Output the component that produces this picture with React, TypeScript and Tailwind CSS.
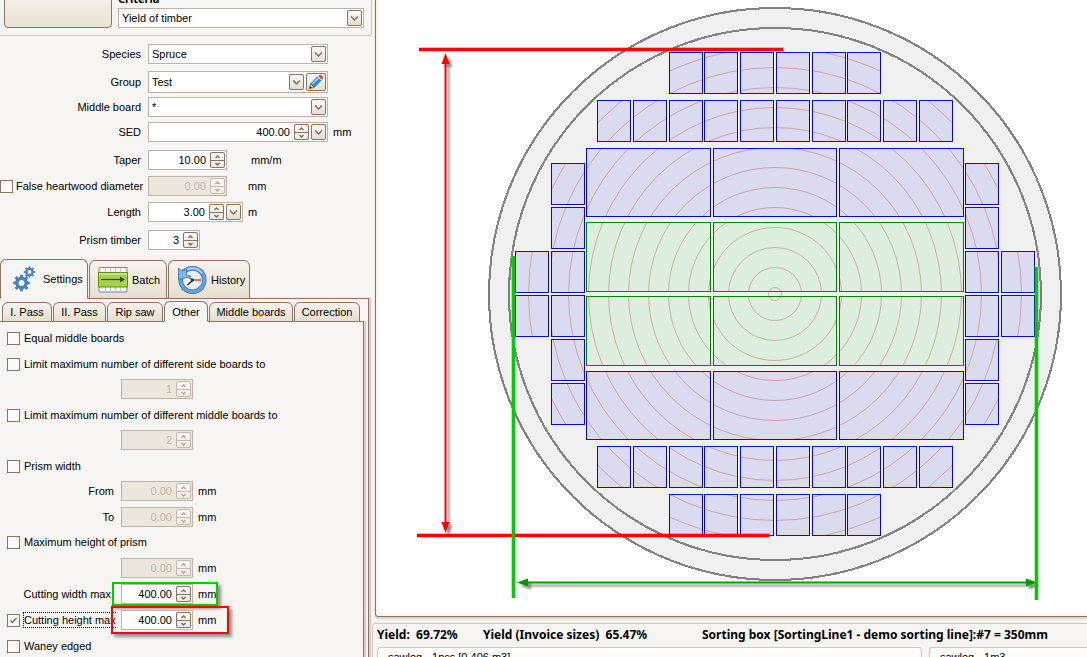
import type { ReactNode } from "react";

const SMALL_COLS = [597, 633, 669, 704, 740, 776, 812, 847, 883, 919];
const LARGE_COLS = [
  { x: 586, w: 124 },
  { x: 713, w: 123 },
  { x: 839, w: 124 },
];
const RADII = [26, 46, 66, 86, 106, 126, 146, 166, 186, 206, 226, 246, 266];

type Board = { x: number; y: number; w: number; h: number; middle?: boolean };

const row = (xs: number[], y: number): Board[] => xs.map((x) => ({ x, y, w: 33, h: 41 }));
const column = (x: number, ys: number[]): Board[] => ys.map((y) => ({ x, y, w: 33, h: 41 }));

const BOARDS: Board[] = [
  ...row(SMALL_COLS.slice(2, 8), 52),
  ...row(SMALL_COLS, 100),
  ...LARGE_COLS.map((c) => ({ ...c, y: 148, h: 68 })),
  ...LARGE_COLS.map((c) => ({ ...c, y: 222, h: 69, middle: true })),
  ...LARGE_COLS.map((c) => ({ ...c, y: 296, h: 69, middle: true })),
  ...LARGE_COLS.map((c) => ({ ...c, y: 371, h: 68 })),
  ...row(SMALL_COLS, 446),
  ...row(SMALL_COLS.slice(2, 8), 494),
  ...column(551, [163, 207, 251, 295, 339, 383]),
  ...column(965, [163, 207, 251, 295, 339, 383]),
  ...column(515, [251, 295]),
  ...column(1001, [251, 295]),
];

/** Cross-section of the log with the cutting pattern and its limits. */
function LogSection() {
  return (
    <svg
      viewBox="379 0 708 613"
      preserveAspectRatio="xMinYMin meet"
      className="block h-full w-full"
      role="img"
      aria-label="Cutting pattern"
    >
      <defs>
        <clipPath id="boards">
          {BOARDS.map((b) => (
            <rect key={`${b.x}-${b.y}`} x={b.x} y={b.y} width={b.w + 1} height={b.h + 1} />
          ))}
        </clipPath>
        <filter id="shadow" x="-20" y="-20" width="1200" height="700" filterUnits="userSpaceOnUse">
          <feDropShadow dx="3" dy="3" stdDeviation="1.2" floodColor="#000" floodOpacity="0.45" />
        </filter>
      </defs>
      <g stroke="#808080" strokeWidth="2" fill="#f0f0f0" shapeRendering="crispEdges">
        <circle cx="775" cy="294" r="286" />
        <circle cx="775" cy="294" r="266" />
      </g>
      {BOARDS.map((b) => (
        <rect
          key={`${b.x}-${b.y}`}
          x={b.x + 0.5}
          y={b.y + 0.5}
          width={b.w}
          height={b.h}
          fill={b.middle ? "#dcefdc" : "#dbdbef"}
        />
      ))}
      <g fill="none" stroke="#b4463c" strokeOpacity="0.38" clipPath="url(#boards)">
        {RADII.map((r) => (
          <circle key={r} cx="775" cy="294" r={r + 0.5} />
        ))}
      </g>
      <circle cx="775" cy="294" r="6.5" fill="none" stroke="#b4463c" strokeOpacity="0.38" />
      {BOARDS.map((b) => (
        <rect
          key={`${b.x}-${b.y}`}
          x={b.x + 0.5}
          y={b.y + 0.5}
          width={b.w}
          height={b.h}
          fill="none"
          stroke={b.middle ? "#008000" : "#0000ff"}
        />
      ))}
      <g stroke="#ff0000">
        <path d="M419 49.5H784M417 535.5H770" strokeWidth="5" strokeOpacity="0.3" />
        <path d="M419 49.5H783M417 535.5H769" strokeWidth="3" />
      </g>
      <g filter="url(#shadow)">
        <path d="M445.5 60V526" stroke="#ff0000" strokeWidth="2" />
        <path d="M445.5 53L449.5 64H441.5ZM445.5 533L449.5 522H441.5Z" fill="#ff0000" />
      </g>
      <g filter="url(#shadow)">
        <path d="M526 582.5H1028" stroke="#009900" strokeWidth="2" />
        <path d="M517 582.5L528 578.5V586.5ZM1037 582.5L1026 578.5V586.5Z" fill="#009900" />
      </g>
      <g stroke="#00cc00">
        <path d="M513.5 256V598M1036.5 267V600" strokeWidth="5" strokeOpacity="0.3" />
        <path d="M513.5 256V598M1036.5 267V600" strokeWidth="3" />
      </g>
    </svg>
  );
}

function Chevron() {
  return (
    <svg viewBox="0 0 15 16" className="h-4 w-[15px]" aria-hidden="true">
      <path d="M4 6.5L7.5 10L11 6.5" fill="none" stroke="#7d6a5c" strokeWidth="1.3" />
    </svg>
  );
}

const KEY = "rounded-[2px] border border-[#8b7365] bg-linear-to-b from-[#fbfaf7] to-[#e6dfcf]";

function Spinner({ label, disabled }: { label: string; disabled?: boolean }) {
  const tone = disabled ? "border-[#c4bab0] text-[#b0a69c]" : "border-[#8b7365] text-[#7d6a5c]";
  return (
    <span
      className={`flex h-4 w-[15px] shrink-0 flex-col overflow-hidden rounded-[2px] border bg-linear-to-b from-[#fbfaf7] to-[#efeade] ${tone}`}
    >
      <button type="button" disabled={disabled} aria-label={`Increase ${label}`} className="h-[7px]">
        <svg viewBox="0 0 13 7" className="block h-[7px] w-[13px]">
          <path d="M4.5 5L6.5 3L8.5 5" fill="none" stroke="currentColor" strokeWidth="1.4" />
        </svg>
      </button>
      <button
        type="button"
        disabled={disabled}
        aria-label={`Decrease ${label}`}
        className="h-[7px] border-t border-inherit"
      >
        <svg viewBox="0 0 13 6" className="block h-[6px] w-[13px]">
          <path d="M4.5 2L6.5 4L8.5 2" fill="none" stroke="currentColor" strokeWidth="1.4" />
        </svg>
      </button>
    </span>
  );
}

type NumberFieldProps = {
  id: string;
  label: string;
  value: string;
  width: string;
  disabled?: boolean;
  menu?: boolean;
};

function NumberField({ id, label, value, width, disabled, menu }: NumberFieldProps) {
  return (
    <span
      className={`flex h-5 shrink-0 items-center gap-0.5 border border-[#bfb2a8] pr-px ${width} ${
        disabled ? "bg-[#ebe7dd] text-[#bdb5a9]" : "bg-white"
      }`}
    >
      <input
        id={id}
        aria-label={label}
        defaultValue={value}
        disabled={disabled}
        className="h-full min-w-0 flex-1 pr-0.5 text-right outline-none"
      />
      <Spinner label={label} disabled={disabled} />
      {menu && (
        <button type="button" aria-label={`${label} presets`} className={`h-4 w-[15px] overflow-hidden ${KEY}`}>
          <span className="-m-px block">
            <Chevron />
          </span>
        </button>
      )}
    </span>
  );
}

function Dropdown({ id, value, children }: { id: string; value: string; children?: ReactNode }) {
  return (
    <span className={`flex w-full items-center gap-0.5 border border-[#bfb2a8] bg-white pr-px ${children ? "h-[22px]" : "h-5"}`}>
      <span className="relative flex h-full flex-1 items-center">
        <select id={id} className="h-full w-full appearance-none pl-[3px] outline-none">
          <option>{value}</option>
        </select>
        <span className={`pointer-events-none absolute right-0 h-4 w-[15px] ${KEY}`}>
          <span className="-m-px block">
            <Chevron />
          </span>
        </span>
      </span>
      {children}
    </span>
  );
}

function PencilIcon() {
  return (
    <svg viewBox="0 0 18 18" className="h-4 w-4 shrink-0" aria-hidden="true">
      <path d="M1.5 16.5L3 11L7 15Z" fill="#f7d774" stroke="#6b5518" strokeWidth="0.6" />
      <path d="M1.5 16.5L2.2 13.5L4.5 15.8Z" fill="#222" />
      <path d="M3 11L11.5 2.5L15.5 6.5L7 15Z" fill="#2b8ae8" stroke="#0f4fa0" strokeWidth="0.8" />
      <path d="M4.8 11.2L12.2 3.8" stroke="#9fd4ff" strokeWidth="1.8" />
      <path d="M11.5 2.5L13 1.2Q14 0.6 15 1.5L16.5 3Q17.5 4 16.7 5.2L15.5 6.5Z" fill="#e8402c" />
      <path d="M11.2 2.8L15.2 6.8" stroke="#dfe6ee" strokeWidth="1.2" />
    </svg>
  );
}

function Gear({ x, y, s }: { x: number; y: number; s: number }) {
  return (
    <g transform={`translate(${x} ${y}) scale(${s})`} fill="none" stroke="#4a80bd">
      <circle r="5" strokeWidth="3.6" />
      {[0, 45, 90, 135, 180, 225, 270, 315].map((a) => (
        <path key={a} d="M0 -6V-9" strokeWidth="3.2" transform={`rotate(${a})`} />
      ))}
    </g>
  );
}

function GearsIcon() {
  return (
    <svg viewBox="0 0 24 26" className="h-[26px] w-6" aria-hidden="true">
      <Gear x={8.5} y={17} s={0.92} />
      <Gear x={16.5} y={6} s={0.62} />
    </svg>
  );
}

function BatchIcon() {
  return (
    <svg viewBox="0 0 30 26" className="h-[26px] w-[30px]" aria-hidden="true">
      <rect x="1" y="0.5" width="28" height="24.5" rx="1" fill="#f4f7fd" stroke="#6f86b8" />
      <path d="M7.5 1V25M12.5 1V25M17.5 1V25M22.5 1V25" stroke="#b9c6e2" />
      <rect x="0.5" y="5.5" width="29" height="14.5" fill="#a5cf4c" stroke="#5f8c1e" />
      <path d="M1 7H29" stroke="#c5e37e" strokeWidth="2" />
      <path d="M3 12.5H23" stroke="#3c4a12" strokeWidth="1.2" />
      <path d="M22 9.5L27 12.5L22 15.5Z" fill="#3c4a12" />
    </svg>
  );
}

function HistoryIcon() {
  return (
    <svg viewBox="0 0 30 30" className="h-[30px] w-[30px]" aria-hidden="true">
      <circle cx="15.5" cy="15" r="10.5" fill="#eaf0f8" />
      <circle cx="15.5" cy="15" r="11.8" fill="none" stroke="#2a5f9e" strokeWidth="4.4" />
      <circle cx="15.5" cy="15" r="11.8" fill="none" stroke="#62a3df" strokeWidth="3.2" />
      <path d="M6.5 7.5A11.8 11.8 0 0 1 25 8" fill="none" stroke="#a5d2f5" strokeWidth="1.8" />
      <path d="M1.5 3L5 6L10 4.5L9 9.5L14 11.5L1.5 14.5Z" fill="#7fbcec" stroke="#2f6cab" strokeWidth="0.8" />
      <path d="M15 15H24" stroke="#d32f1e" strokeWidth="1.3" />
      <path d="M10.5 20L16 15M12.5 13L16 15" stroke="#222" strokeWidth="1.3" />
      <circle cx="15.5" cy="15" r="1.5" fill="#333" />
    </svg>
  );
}

function FormRow({ id, label, gap, children }: { id: string; label: string; gap: string; children: ReactNode }) {
  return (
    <div className={`flex items-center ${gap}`}>
      <label htmlFor={id} className="w-[141px] shrink-0 text-right">
        {label}
      </label>
      <div className="ml-[7px] flex items-center">{children}</div>
    </div>
  );
}

function Tick({ checked }: { checked?: boolean }) {
  return (
    <span className="relative flex h-[13px] w-[13px] shrink-0">
      <input
        type="checkbox"
        defaultChecked={checked}
        className="peer h-[13px] w-[13px] appearance-none border border-[#8b7365] bg-[#fbfaf7]"
      />
      <svg viewBox="0 0 13 13" className="pointer-events-none absolute hidden h-[13px] w-[13px] peer-checked:block">
        <path d="M3.5 6.5L5.5 8.5L9.5 4" fill="none" stroke="#7d6a5c" strokeWidth="1.3" />
      </svg>
    </span>
  );
}

function CheckRow({ label, gap, checked }: { label: string; gap: string; checked?: boolean }) {
  return (
    <label className={`flex h-5 items-center gap-1 pl-[7px] ${gap}`}>
      <Tick checked={checked} />
      {label}
    </label>
  );
}

type LimitRowProps = { label?: string; name: string; value: string; gap: string; unit?: boolean; disabled?: boolean };

function LimitRow({ label, name, value, gap, unit, disabled }: LimitRowProps) {
  const id = name.toLowerCase().replace(/ /g, "-");
  return (
    <div className={`flex h-5 items-center ${gap}`}>
      <label htmlFor={id} className="w-[114px] shrink-0 text-right whitespace-nowrap">
        {label}
      </label>
      <span className="ml-[7px]">
        <NumberField id={id} label={name} value={value} width="w-[72px]" disabled={disabled} />
      </span>
      {unit && <span className="ml-[5px]">mm</span>}
    </div>
  );
}

const TABS = [
  { name: "Settings", icon: <GearsIcon />, pad: "w-[88px] pl-3 gap-1.5" },
  { name: "Batch", icon: <BatchIcon />, pad: "w-[78px] pl-2 gap-1" },
  { name: "History", icon: <HistoryIcon />, pad: "w-[82px] pl-2 gap-1" },
];

const PASSES = [
  { name: "I. Pass", width: "w-[50px]" },
  { name: "II. Pass", width: "w-[53px]" },
  { name: "Rip saw", width: "w-[56px]" },
  { name: "Other", width: "w-[44px]" },
  { name: "Middle boards", width: "w-[84px]" },
  { name: "Correction", width: "w-[66px]" },
];

const IDLE_TAB = "border-b-[#8b7365] bg-linear-to-b from-[#f6f4ee] to-[#e6dfcf]";

function SettingsPanel() {
  return (
    <div className="flex min-h-0 flex-1 flex-col">
      <div role="tablist" className="z-10 flex h-10 shrink-0 items-end gap-px">
        {TABS.map((t, i) => (
          <button
            key={t.name}
            type="button"
            role="tab"
            aria-selected={i === 0}
            className={`flex items-center rounded-t-md border border-[#8b7365] ${t.pad} ${
              i === 0 ? "h-10 border-b-[#f6f5f2] bg-[#f6f5f2]" : `h-[39px] ${IDLE_TAB}`
            }`}
          >
            {t.icon}
            {t.name}
          </button>
        ))}
      </div>
      <div className="-mt-px mr-[6px] flex min-h-0 flex-1 flex-col border-t border-r border-[#8b7365] pt-0.5 pr-1 shadow-[2px_0_1px_#d8d0c4]">
        <div role="tablist" className="z-10 flex h-[21px] shrink-0 items-end gap-px pl-0.5">
          {PASSES.map((t) => (
            <button
              key={t.name}
              type="button"
              role="tab"
              aria-selected={t.name === "Other"}
              className={`rounded-t-md border border-[#8b7365] whitespace-nowrap ${t.width} ${
                t.name === "Other" ? "h-[21px] border-b-[#f6f5f2] bg-[#f6f5f2]" : `h-5 ${IDLE_TAB}`
              }`}
            >
              {t.name}
            </button>
          ))}
        </div>
        <div className="-mt-px min-h-0 flex-1 overflow-hidden border-t border-r border-[#8b7365] pt-1.5 shadow-[2px_0_1px_#d8d0c4]">
          <CheckRow label="Equal middle boards" gap="" />
          <CheckRow label="Limit maximum number of different side boards to" gap="mt-1.5" />
          <LimitRow name="Side board limit" value="1" gap="mt-[5px]" disabled />
          <CheckRow label="Limit maximum number of different middle boards to" gap="mt-1.5" />
          <LimitRow name="Middle board limit" value="2" gap="mt-[5px]" disabled />
          <CheckRow label="Prism width" gap="mt-1.5" />
          <LimitRow label="From" name="Prism width from" value="0.00" gap="mt-[5px]" unit disabled />
          <LimitRow label="To" name="Prism width to" value="0.00" gap="mt-1.5" unit disabled />
          <CheckRow label="Maximum height of prism" gap="mt-[5px]" />
          <LimitRow name="Prism height" value="0.00" gap="mt-1.5" unit disabled />
          <div className="relative mt-1.5">
            <LimitRow label="Cutting width max:" name="Cutting width" value="400.00" gap="" unit />
            <span className="pointer-events-none absolute -top-0.5 left-[112px] h-6 w-[106px] border-2 border-[#00cc00] shadow-[3px_3px_3px_#00000066]" />
          </div>
          <div className="relative mt-1.5 flex h-5 items-center pl-[7px]">
            <label className="flex w-[107px] items-center gap-[3px] whitespace-nowrap">
              <Tick checked />
              <span className="border border-r-0 border-dotted border-black">Cutting height max</span>
            </label>
            <span className="ml-[7px]">
              <NumberField id="cutting-height" label="Cutting height" value="400.00" width="w-[72px]" />
            </span>
            <span className="ml-[5px]">mm</span>
            <span className="pointer-events-none absolute -top-1 left-[111px] h-7 w-[118px] border-2 border-[#ff0000] shadow-[3px_3px_3px_#00000066]" />
          </div>
          <CheckRow label="Waney edged" gap="mt-1.5" />
        </div>
      </div>
    </div>
  );
}

export default function App() {
  return (
    <div className="flex h-screen overflow-hidden bg-[#f6f5f2] font-['Liberation_Sans',Arial,sans-serif] text-[11px] leading-[14px] text-black">
      <aside className="flex w-[375px] shrink-0 flex-col">
        <header className="mr-[3px] flex h-9 shrink-0 items-end gap-1.5 overflow-hidden rounded-br-[3px] border-r border-b border-[#d0c8bc] pr-[7px] pb-[7px] pl-1">
          <button
            type="button"
            aria-label="Calculate"
            className="h-10 w-[108px] rounded-[4px] border border-[#8b7365] bg-linear-to-b from-[#f6f4ee] to-[#e8e2d2]"
          />
          <div className="flex flex-1 flex-col gap-0.5">
            <label htmlFor="criteria" className="font-['Noto_Sans',sans-serif] font-bold">
              Criteria
            </label>
            <Dropdown id="criteria" value="Yield of timber" />
          </div>
        </header>
        <section className="shrink-0 pt-2 pb-[9px]">
          <FormRow id="species" label="Species" gap="">
            <span className="w-[180px]">
              <Dropdown id="species" value="Spruce" />
            </span>
          </FormRow>
          <FormRow id="group" label="Group" gap="mt-[7px]">
            <span className="w-[180px]">
              <Dropdown id="group" value="Test">
                <button type="button" aria-label="Edit group" className={`flex h-[18px] w-5 items-center justify-center ${KEY}`}>
                  <PencilIcon />
                </button>
              </Dropdown>
            </span>
          </FormRow>
          <FormRow id="middle" label="Middle board" gap="mt-1">
            <span className="w-[180px]">
              <Dropdown id="middle" value="*" />
            </span>
          </FormRow>
          <FormRow id="sed" label="SED" gap="mt-[5px]">
            <NumberField id="sed" label="SED" value="400.00" width="w-[180px]" menu />
            <span className="ml-[5px]">mm</span>
          </FormRow>
          <FormRow id="taper" label="Taper" gap="mt-2">
            <NumberField id="taper" label="Taper" value="10.00" width="w-[79px]" />
            <span className="ml-6">mm/m</span>
          </FormRow>
          <div className="mt-1.5 flex items-center">
            <label className="flex w-[148px] items-center gap-[3px] whitespace-nowrap">
              <Tick />
              False heartwood diameter
            </label>
            <NumberField id="heartwood" label="False heartwood diameter" value="0.00" width="w-[79px]" disabled />
            <span className="ml-[21px]">mm</span>
          </div>
          <FormRow id="length" label="Length" gap="mt-1.5">
            <NumberField id="length" label="Length" value="3.00" width="w-[95px]" menu />
            <span className="ml-[5px]">m</span>
          </FormRow>
          <FormRow id="prism" label="Prism timber" gap="mt-2">
            <NumberField id="prism" label="Prism timber" value="3" width="w-[52px]" />
          </FormRow>
        </section>
        <SettingsPanel />
      </aside>
      <main className="flex min-w-0 flex-1 flex-col">
        <div className="min-h-0 flex-1 rounded-bl-[3px] border-b border-l border-[#8b7365] pb-[3px] pl-[3px] shadow-[0_2px_2px_#d8d0c4]">
          <div className="h-full bg-white">
            <LogSection />
          </div>
        </div>
        <footer className="mt-1.5 -ml-[3px] h-[34px] shrink-0 overflow-hidden rounded-tl-[3px] border-t border-l border-[#d0c8bc] pl-1">
          <div className="flex h-[23px] items-start pt-1 font-['Noto_Sans',sans-serif] text-xs leading-[14px] font-bold whitespace-nowrap">
            <span className="w-[106px]">Yield:&nbsp; 69.72%</span>
            <span className="w-[219px]">Yield (Invoice sizes)&nbsp; 65.47%</span>
            <span>Sorting box [SortingLine1 - demo sorting line]:#7 = 350mm</span>
          </div>
          <div className="flex gap-[7px]">
            <div className="h-5 flex-1 rounded-t-[3px] border border-[#d0c8bc] bg-linear-to-b from-white to-[#f6f5f2] pt-0.5 pl-2.5">
              sawlog - 1pcs [0.406 m3]
            </div>
            <div className="h-5 w-[158px] rounded-tl-[3px] border border-r-0 border-[#d0c8bc] bg-linear-to-b from-white to-[#f6f5f2] pt-0.5 pl-2.5">
              sawlog - 1m3
            </div>
          </div>
        </footer>
      </main>
    </div>
  );
}
